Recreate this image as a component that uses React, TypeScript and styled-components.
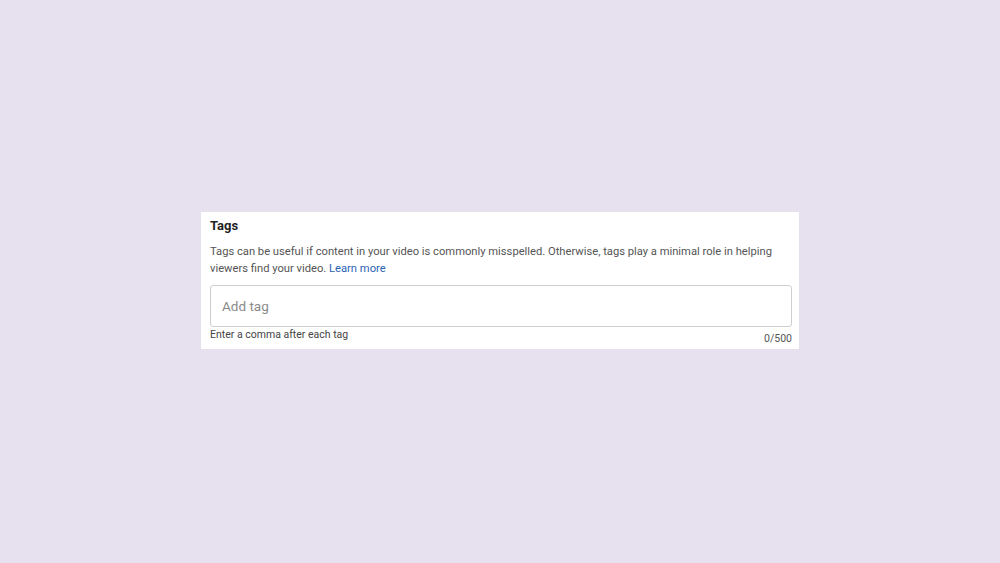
import React from "react";
import styled, { createGlobalStyle } from "styled-components";

const Global = createGlobalStyle`
  html, body { margin: 0; padding: 0; }
  body {
    width: 1000px;
    height: 563px;
    background: #e7e1ef;
    font-family: Roboto, "Noto Sans", Arial, sans-serif;
    overflow: hidden;
  }
`;

const Page = styled.div`
  width: 1000px;
  height: 563px;
  display: flex;
  align-items: flex-start;
  justify-content: center;
  padding-top: 212px;
  box-sizing: border-box;
`;

const Card = styled.section`
  width: 598px;
  height: 137px;
  box-sizing: border-box;
  background: #ffffff;
  padding: 5px 7px 0 9px;
  display: flex;
  flex-direction: column;
`;

const Title = styled.h2`
  margin: 0;
  font-size: 13px;
  line-height: 18px;
  font-weight: 700;
  color: #1f1f1f;
`;

const Description = styled.p`
  margin: 8px 0 0;
  font-size: 11.2px;
  line-height: 17px;
  color: #555555;
`;

const Link = styled.a`
  color: #2d63b5;
  text-decoration: none;
`;

const InputBox = styled.div`
  margin-top: 8px;
  height: 42px;
  box-sizing: border-box;
  border: 1px solid #cfcfcf;
  border-radius: 3px;
  display: flex;
  align-items: center;
  padding-left: 11px;
`;

const Input = styled.input`
  border: none;
  outline: none;
  background: transparent;
  font-family: inherit;
  font-size: 13.5px;
  color: #333;
  width: 100%;
  padding: 0;
  &::placeholder {
    color: #8a8a8a;
  }
`;

const HelperRow = styled.div`
  display: flex;
  justify-content: space-between;
  align-items: flex-start;
  margin-top: 1px;
`;

const HelperText = styled.span`
  font-size: 10.5px;
  line-height: 13px;
  color: #444444;
`;

const Counter = styled.span`
  font-size: 10.5px;
  line-height: 13px;
  color: #555555;
  margin-top: 4px;
`;

export default function App() {
  return (
    <>
      <Global />
      <Page>
        <Card>
          <Title>Tags</Title>
          <Description>
            Tags can be useful if content in your video is commonly misspelled. Otherwise, tags play a minimal role in helping
            viewers find your video. <Link href="#">Learn more</Link>
          </Description>
          <InputBox>
            <Input placeholder="Add tag" />
          </InputBox>
          <HelperRow>
            <HelperText>Enter a comma after each tag</HelperText>
            <Counter>0/500</Counter>
          </HelperRow>
        </Card>
      </Page>
    </>
  );
}
